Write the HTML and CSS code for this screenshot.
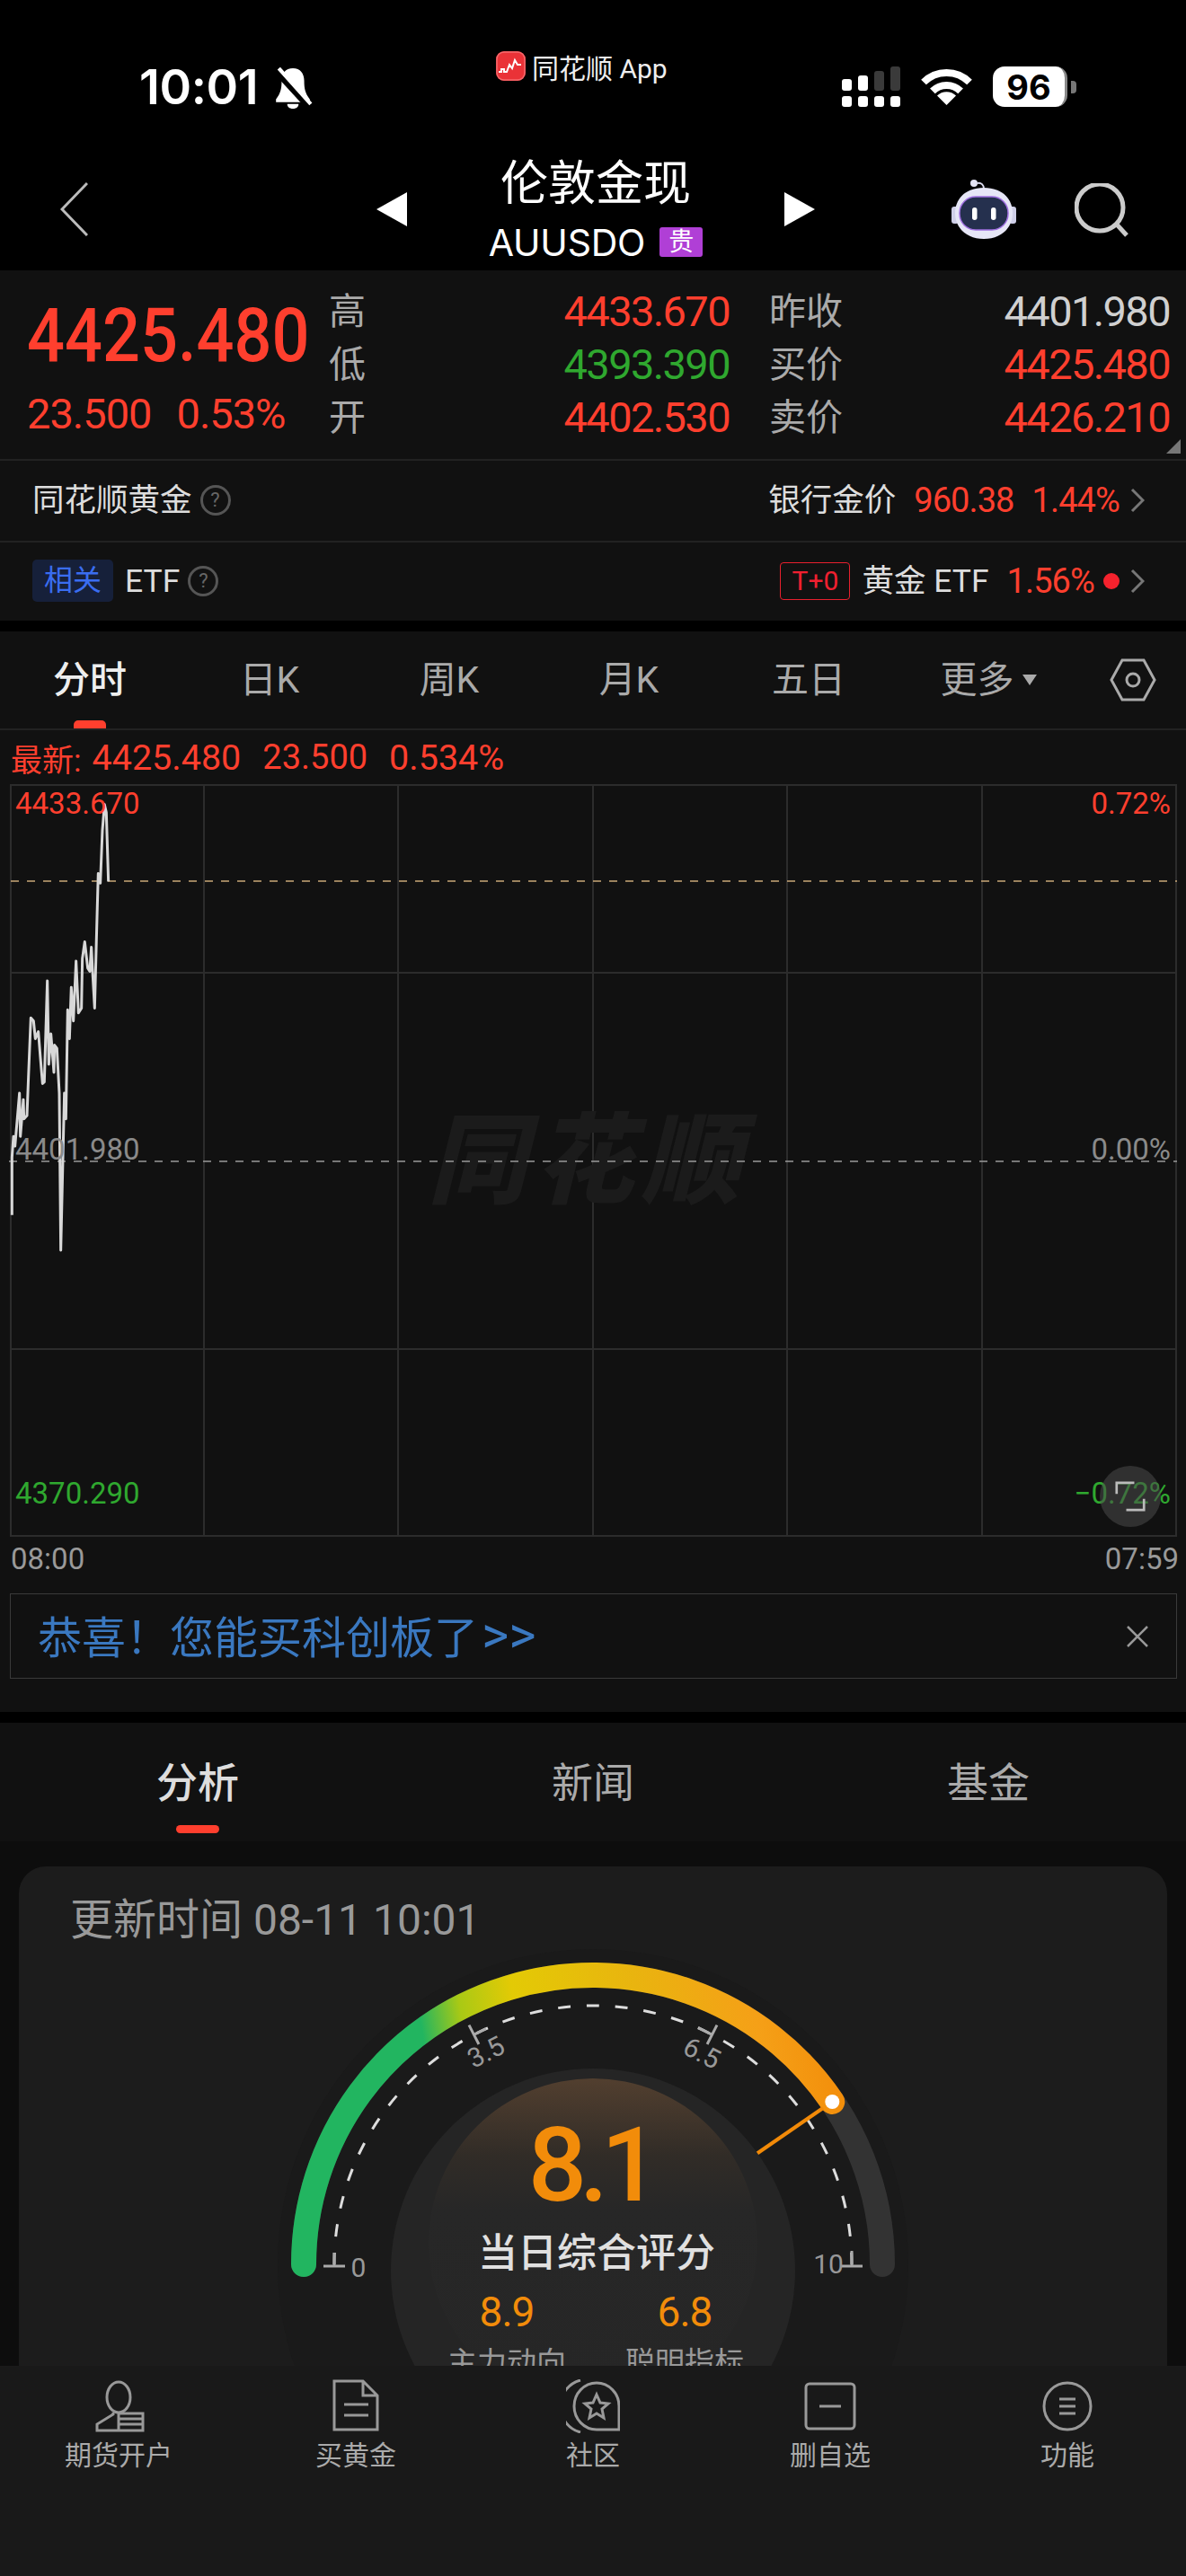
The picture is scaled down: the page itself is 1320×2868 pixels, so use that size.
FILE: index.html
```html
<!DOCTYPE html>
<html lang="zh">
<head>
<meta charset="utf-8">
<title>伦敦金现</title>
<link rel="stylesheet" href="styles.css">
</head>
<body>
<div class="screen">
  <div class="scroll">
    <header class="head">
      <div class="status">
        <div class="status-left">
          <span class="clock">10:01</span>
          <svg class="bell" viewBox="0 0 42 44"><path d="M21 1c-8 0-12 6-12 13 0 9-1 13-6 20v3h36v-3c-5-7-6-11-6-20 0-7-4-13-12-13z" fill="#fff"/><path d="M15 39h12c0 3-2 5-6 5s-6-2-6-5z" fill="#fff"/><path d="M4 4l34 37" stroke="#000" stroke-width="8"/><path d="M6 1l34 38" stroke="#fff" stroke-width="4"/></svg>
        </div>
        <div class="status-app">
          <svg class="app-logo" viewBox="0 0 33 33"><rect width="33" height="33" rx="9" fill="#ea3237"/><rect x="1" y="1" width="31" height="31" rx="8" fill="none" stroke="#f4696d" stroke-width="1.5"/><path d="M3 23h3v-3h3v3h3l3-8 3 4 3-9 3 5h4" fill="none" stroke="#fff" stroke-width="2"/></svg>
          <span class="app-name">同花顺 App</span>
        </div>
        <div class="status-right">
          <svg class="signal" viewBox="0 0 65 45"><g fill="#fff"><rect x="0" y="14" width="11" height="13" rx="3"/><rect x="18" y="10" width="11" height="17" rx="3"/><rect x="0" y="33" width="11" height="12" rx="3"/><rect x="18" y="33" width="11" height="12" rx="3"/><rect x="36" y="33" width="11" height="12" rx="3"/><rect x="54" y="33" width="11" height="12" rx="3"/></g><g fill="#3a3a3a"><rect x="36" y="5" width="11" height="22" rx="3"/><rect x="54" y="0" width="11" height="27" rx="3"/></g></svg>
          <svg class="wifi" viewBox="0 0 57 42"><g fill="none" stroke="#fff" stroke-width="8"><path d="M3 16.500A36 36 0 0 1 54 16.500"/><path d="M12.900 26.400A22 22 0 0 1 44.100 26.400"/></g><path d="M28.500 42L18 31.500A14.800 14.800 0 0 1 39 31.500Z" fill="#fff"/></svg>
          <div class="battery"><span class="battery-num">96</span></div>
          <span class="battery-nub"></span>
        </div>
      </div>
      <nav class="nav">
        <div class="nav-back"><svg class="back" viewBox="0 0 31 60"><path d="M30 1L2 30l28 29" fill="none" stroke="#bbb" stroke-width="3"/></svg></div>
        <svg class="tri" viewBox="0 0 34 38"><path d="M34 0v38L0 19z" fill="#fff"/></svg>
        <div class="nav-title">
          <div class="title">伦敦金现</div>
          <div class="sub"><span class="sub-code">AUUSDO</span><span class="gui">贵</span></div>
        </div>
        <svg class="tri" viewBox="0 0 34 38"><path d="M0 0v38l34-19z" fill="#fff"/></svg>
        <div class="nav-tools">
          <svg class="robot" viewBox="0 0 72 66"><path d="M36 10c0-4-3-7-7-6" fill="none" stroke="#dcdcf0" stroke-width="2"/><circle cx="25" cy="4" r="4" fill="#e4e4f4"/><rect x="0" y="30" width="8" height="19" rx="3" fill="#cfcfe8"/><rect x="64" y="30" width="8" height="19" rx="3" fill="#cfcfe8"/><path d="M36 9c22 0 32 14 32 28 0 17-13 29-32 29S4 54 4 37C4 23 14 9 36 9z" fill="#e6e6f6"/><rect x="9" y="19" width="54" height="37" rx="18" fill="#25304e" stroke="#a070e0" stroke-width="1.500"/><rect x="23" y="31" width="5.500" height="14" rx="2.700" fill="#fff"/><rect x="44" y="31" width="5.500" height="14" rx="2.700" fill="#fff"/></svg>
          <svg class="search" viewBox="0 0 60 60"><circle cx="28" cy="27" r="26" fill="none" stroke="#ccc" stroke-width="5"/><path d="M47 46l11 12" stroke="#ccc" stroke-width="5"/></svg>
        </div>
      </nav>
    </header>

    <section class="quote">
      <div class="quote-top">
        <div class="price-box">
          <div class="price">4425.480</div>
          <div class="change"><span>23.500</span><span>0.53%</span></div>
        </div>
        <div class="quote-grid">
          <span class="q-label">高</span><span class="q-val up">4433.670</span><span class="q-label q-second">昨收</span><span class="q-val flat">4401.980</span>
          <span class="q-label">低</span><span class="q-val down">4393.390</span><span class="q-label q-second">买价</span><span class="q-val up">4425.480</span>
          <span class="q-label">开</span><span class="q-val up">4402.530</span><span class="q-label q-second">卖价</span><span class="q-val up">4426.210</span>
        </div>
        <span class="corner"></span>
      </div>
      <div class="info-row">
        <div class="info-left"><span class="info-text">同花顺黄金</span><span class="help">?</span></div>
        <div class="info-right">
          <span class="info-text">银行金价</span><span class="num up gap-20">960.38</span><span class="num up gap-20">1.44%</span>
          <svg class="chev" viewBox="0 0 16 28"><path d="M2 2l12 12L2 26" fill="none" stroke="#777" stroke-width="3"/></svg>
        </div>
      </div>
      <div class="info-row info-row-last">
        <div class="info-left"><span class="chip">相关</span><span class="info-text etf">ETF</span><span class="help">?</span></div>
        <div class="info-right">
          <span class="t0">T+0</span><span class="info-text etf">黄金 ETF</span><span class="num up gap-20">1.56%</span><span class="dot"></span>
          <svg class="chev" viewBox="0 0 16 28"><path d="M2 2l12 12L2 26" fill="none" stroke="#777" stroke-width="3"/></svg>
        </div>
      </div>
    </section>

    <section class="market">
      <div class="ktabs">
        <span class="ktab active">分时</span>
        <span class="ktab">日K</span>
        <span class="ktab">周K</span>
        <span class="ktab">月K</span>
        <span class="ktab">五日</span>
        <span class="ktab">更多<i class="caret"></i></span>
        <span class="khex"><svg viewBox="0 0 52 48"><path d="M2 24L14 2h24l12 22-12 22H14z" fill="none" stroke="#aaa" stroke-width="3"/><circle cx="26" cy="24" r="7" fill="none" stroke="#aaa" stroke-width="3"/></svg></span>
      </div>
      <div class="latest"><span class="l-0">最新:</span><span class="l-1">4425.480</span><span class="l-2">23.500</span><span class="l-3">0.534%</span></div>
      <div class="chart">
        <svg class="chart-svg" viewBox="0 873 1320 838">
          <g stroke="#2c2c2c" stroke-width="2" fill="none">
            <rect x="12" y="874" width="1297" height="836"/>
            <path d="M227 874V1710M443 874V1710M660 874V1710M876 874V1710M1093 874V1710M12 1083H1309M12 1502H1309"/>
          </g>
        </svg>
        <span class="watermark">同花顺</span>
        <svg class="chart-svg chart-over" viewBox="0 873 1320 838">
          <path d="M12 981H1310" stroke="#c9a878" stroke-width="1.500" stroke-dasharray="9 9"/>
          <path d="M10 1293H1310" stroke="#999" stroke-width="1.500" stroke-dasharray="9 9"/>
          <g transform="translate(0 860) scale(.3333 .3571)">
            <path d="M40 1380L40 1200 45 1135 50 1165 65 1000 68 1135 78 1020 80 1080 90 1070 95 950 103 765 112 775 118 830 128 808 135 890 142 970 148 965 158 650 163 910 170 815 180 935 182 850 190 860 198 1000 203 1490 215 1000 220 1080 226 740 232 830 238 670 245 775 254 588 262 750 272 735 275 580 283 528 293 610 300 620 305 545 310 635 316 735 322 520 328 315 335 345 342 180 349 100 355 125 362 340" fill="none" stroke="#d8d8d8" stroke-width="3" vector-effect="non-scaling-stroke" stroke-linejoin="round"/>
          </g>
        </svg>
        <span class="ax ax-l ax-top up">4433.670</span>
        <span class="ax ax-l ax-mid grey">4401.980</span>
        <span class="ax ax-l ax-bot down">4370.290</span>
        <span class="ax ax-r ax-top up">0.72%</span>
        <span class="ax ax-r ax-mid grey">0.00%</span>
        <span class="ax ax-r ax-bot down">−0.72%</span>
        <span class="expand"><svg viewBox="0 0 38 38"><path d="M2 16V2h22M36 22v14H14" fill="none" stroke="#bbb" stroke-width="3"/></svg></span>
      </div>
      <div class="times"><span>08:00</span><span>07:59</span></div>
      <div class="banner">
        <span class="banner-text">恭喜！您能买科创板了<span class="banner-more">&gt;&gt;</span></span>
        <svg class="close" viewBox="0 0 24 24"><path d="M1 1l22 22M23 1L1 23" stroke="#999" stroke-width="2.500"/></svg>
      </div>
    </section>

    <section class="lower">
      <div class="tabs2">
        <span class="tab2 active">分析</span>
        <span class="tab2">新闻</span>
        <span class="tab2">基金</span>
      </div>
      <div class="card">
        <div class="card-title">更新时间 08-11 10:01</div>
        <div class="gauge">
          <svg class="gauge-svg" viewBox="21 2170 1278 470">
            <defs>
              <linearGradient id="arcGrad" gradientUnits="userSpaceOnUse" x1="440" y1="2300" x2="940" y2="2220">
                <stop offset="0" stop-color="#22b560"/>
                <stop offset=".07" stop-color="#22b560"/>
                <stop offset=".16" stop-color="#a9c915"/>
                <stop offset=".28" stop-color="#e3ca05"/>
                <stop offset=".55" stop-color="#e9b40f"/>
                <stop offset=".8" stop-color="#f5a017"/>
                <stop offset="1" stop-color="#f28a08"/>
              </linearGradient>
              <linearGradient id="domeGrad" x1="0" y1="0" x2="0" y2="1">
                <stop offset="0" stop-color="#523f2f"/>
                <stop offset=".235" stop-color="#312c27"/>
                <stop offset=".4" stop-color="#272727"/>
                <stop offset="1" stop-color="#262626"/>
              </linearGradient>
            </defs>
            <circle cx="660" cy="2521" r="351" fill="#1a1a1a"/>
            <path d="M338 2521A322 322 0 0 1 982 2521" fill="none" stroke="#333" stroke-width="28" stroke-linecap="round"/>
            <path d="M338 2521A322 322 0 0 1 926.300 2340" fill="none" stroke="url(#arcGrad)" stroke-width="28" stroke-linecap="round"/>
            <path d="M372 2521A288 288 0 0 1 948 2521" fill="none" stroke="#ddd" stroke-width="3" stroke-dasharray="14 17.850" stroke-dashoffset=".85"/>
            <g stroke="#aaa" stroke-width="3">
              <path d="M360 2523H384M372 2523V2508"/>
              <path d="M360 2523H384M372 2523V2508" transform="rotate(63 660 2521)"/>
              <path d="M936 2523H960M948 2523V2506"/>
              <path d="M936 2523H960M948 2523V2506" transform="rotate(-63 660 2521)"/>
            </g>
            <text class="g-tick" x="399" y="2535">0</text>
            <text class="g-tick" x="922" y="2531">10</text>
            <text class="g-tick" x="541" y="2295" transform="rotate(-27 541 2285)">3.5</text>
            <text class="g-tick" x="781" y="2296" transform="rotate(27 781 2286)">6.5</text>
            <path d="M842 2398L916 2347" stroke="#f28a08" stroke-width="4"/>
            <circle cx="926.300" cy="2340" r="8" fill="#fff"/>
            <circle cx="660" cy="2528" r="225" fill="#252525"/>
            <circle cx="660" cy="2497" r="183" fill="url(#domeGrad)"/>
            <text class="g-score" x="657" y="2450">8.1</text>
            <text class="g-name" x="664" y="2524">当日综合评分</text>
            <text class="g-sub" x="564" y="2590">8.9</text>
            <text class="g-sub" x="762" y="2590">6.8</text>
            <text class="g-cap" x="564" y="2642">主力动向</text>
            <text class="g-cap" x="762" y="2642">聪明指标</text>
          </svg>
        </div>
      </div>
    </section>
  </div>

  <footer class="bar">
    <div class="bar-item">
      <svg class="bar-icon" viewBox="0 0 60 60"><ellipse cx="30" cy="20" rx="13" ry="17"/><path d="M24 37v2L6 50v7h24M30 38h27v19H30zM30 44h27M30 50h27"/></svg>
      <span>期货开户</span>
    </div>
    <div class="bar-item">
      <svg class="bar-icon" viewBox="0 0 60 60"><path d="M6 2h32l16 16v38H6zM38 2v16h16M17 28h27M17 40h27"/></svg>
      <span>买黄金</span>
    </div>
    <div class="bar-item">
      <svg class="bar-icon" viewBox="0 0 60 60"><path d="M59 30A25 26 0 1 0 34 56h25zM16 1A30 30 0 0 0 16 59M34 17l4 9 9 1-7 6 2 10-8-5-8 5 2-10-7-6 9-1z"/></svg>
      <span>社区</span>
    </div>
    <div class="bar-item">
      <svg class="bar-icon" viewBox="0 0 60 60"><rect x="3" y="5" width="54" height="50" rx="4"/><path d="M18 30h24"/></svg>
      <span>删自选</span>
    </div>
    <div class="bar-item">
      <svg class="bar-icon" viewBox="0 0 60 60"><circle cx="30" cy="30" r="26"/><path d="M21 22h18M21 30h18M21 38h18"/></svg>
      <span>功能</span>
    </div>
  </footer>
</div>
</body>
</html>
```
FILE: styles.css
```css
* { box-sizing: border-box; }
html, body { margin: 0; padding: 0; background: #000; }
body { font-family: Roboto, "Noto Sans CJK SC", sans-serif; color: #ccc; }
.screen { width: 1320px; height: 2868px; display: flex; flex-direction: column; overflow: hidden; }
.scroll { height: 2634px; overflow: hidden; flex: none; }

.up { color: #ff3f2e; }
.down { color: #2fa82f; }
.flat { color: #d0d0d0; }
.grey { color: #8a8a8a; }

.head { height: 301px; background: #000; }
.status { height: 172px; display: grid; grid-template-columns: 552px 1fr auto; }
.status-left { display: flex; padding: 70px 0 0 155px; gap: 17px; align-items: flex-start; }
.clock { font-family: Inter, sans-serif; font-weight: 600; font-size: 54px; line-height: 54px; color: #fff; letter-spacing: -.4px; }
.bell { width: 44px; height: 46px; margin-top: 5px; }
.status-app { display: flex; align-items: center; gap: 7px; height: 33px; margin-top: 57px; }
.app-logo { width: 33px; height: 33px; }
.app-name { font-size: 30px; color: #eee; }
.status-right { display: flex; align-items: flex-start; padding: 74px 122px 0 0; }
.signal { width: 65px; height: 45px; }
.wifi { width: 57px; height: 42px; margin: 1px 23px 0 23px; }
.battery { width: 83px; height: 45px; background: #fff; border-radius: 13px; display: flex; align-items: center; justify-content: center; border-right: 3px solid #888; }
.battery-num { font-family: Inter, sans-serif; font-weight: 700; font-size: 38px; color: #000; }
.battery-nub { width: 6px; height: 14px; background: #777; border-radius: 0 4px 4px 0; margin: 16px 0 0 4px; }

.nav { height: 129px; display: grid; grid-template-columns: 419px 34px 420px 34px 1fr; align-items: center; }
.nav-back { padding-left: 67px; display: flex; margin-top: -8px; }
.back { width: 31px; height: 60px; }
.tri { width: 34px; height: 38px; margin-top: -8px; }
.nav-title { display: flex; flex-direction: column; align-items: center; margin-top: -6px; }
.title { font-size: 53px; line-height: 60px; color: #fff; }
.sub { display: flex; align-items: center; gap: 16px; line-height: 46px; color: #fff; margin-top: 12px; }
.sub-code { font-family: Inter, sans-serif; font-size: 41px; letter-spacing: -.2px; }
.gui { width: 48px; height: 33px; background: #b03fd6; border-radius: 3px; font-size: 28px; line-height: 33px; text-align: center; }
.nav-tools { display: flex; align-items: flex-start; padding-left: 152px; margin-top: -8px; gap: 65px; }
.robot { width: 72px; height: 66px; }
.search { width: 60px; height: 60px; margin-top: 4px; }

.quote { height: 390px; background: #111; border-top: 1px solid #111; }
.quote-top { position: relative; display: flex; height: 211px; border-bottom: 2px solid #222; }
.price-box { width: 366px; padding-left: 30px; flex: none; }
.price { width: 336px; font-size: 83px; line-height: 84px; font-weight: 500; color: #ff3f2e; margin-top: 30px; white-space: nowrap; transform: scaleX(.89); transform-origin: left center; }
.change { display: flex; gap: 28px; font-size: 47px; line-height: 50px; letter-spacing: -1px; color: #ff3f2e; margin-top: 20px; }
.quote-grid { flex: 1; display: grid; grid-template-columns: 50px 396px 125px 1fr; grid-auto-rows: 59px; padding: 14px 18px 0 0; align-items: center; }
.q-label { font-size: 41px; line-height: 56px; margin-top: 2px; color: #aaa; }
.q-val { font-size: 47px; font-weight: 400; letter-spacing: -1.600px; text-align: right; margin-top: 2px; }
.q-second { padding-left: 44px; white-space: nowrap; }
.corner { position: absolute; right: 6px; bottom: 6px; width: 0; height: 0; border-style: solid; border-width: 0 0 16px 16px; border-color: transparent transparent #777 transparent; }

.info-row { height: 91px; display: flex; justify-content: space-between; align-items: center; padding: 0 46px 2px 36px; border-bottom: 2px solid #222; }
.info-row-last { height: 87px; padding-bottom: 2px; border-bottom: 0; }
.info-left, .info-right { display: flex; align-items: center; }
.info-text { font-size: 35.500px; line-height: 44px; color: #ddd; }
.help { width: 34px; height: 34px; border-radius: 50%; border: 3px solid #555; color: #666; font-size: 22px; line-height: 28px; text-align: center; margin-left: 9px; }
.num { font-size: 38px; letter-spacing: -.9px; }
.gap-20 { margin-left: 20px; }
.chev { width: 16px; height: 28px; margin-left: 12px; }
.chip { width: 90px; height: 47px; border-radius: 5px; background: #16203a; color: #3a6df0; font-size: 32px; line-height: 47px; text-align: center; }
.etf { margin-left: 13px; }
.t0 { width: 78px; height: 42px; border: 1px solid #e8202e; border-radius: 4px; color: #f02030; font-size: 30px; line-height: 40px; text-align: center; }
.dot { width: 18px; height: 18px; border-radius: 50%; background: #f5222d; margin-left: 10px; }

.market { height: 1203px; margin-top: 12px; background: #111; }
.ktabs { height: 110px; display: flex; border-bottom: 2px solid #222; }
.ktab { position: relative; width: 200px; height: 108px; display: flex; align-items: center; justify-content: center; font-size: 41px; line-height: 60px; color: #aaa; }
.ktab.active { color: #eee; font-weight: 500; }
.ktab.active::after { content: ""; position: absolute; left: 82px; bottom: 0; width: 36px; height: 9px; border-radius: 5px 5px 0 0; background: #ff3f2e; }
.caret { width: 0; height: 0; border-style: solid; border-width: 12px 8px 0 8px; border-color: #aaa transparent transparent transparent; margin-left: 9px; }
.khex { flex: 1; display: flex; align-items: center; padding-left: 35px; }
.khex svg { width: 52px; height: 48px; }

.latest { height: 60px; padding-left: 12px; display: flex; align-items: center; font-size: 39.500px; color: #ff3f2e; white-space: nowrap; }
.l-0 { font-size: 35px; }
.l-1 { margin-left: 12px; }
.l-2 { margin-left: 24px; font-size: 38px; }
.l-3 { margin-left: 24px; }

.chart { position: relative; height: 838px; }
.chart-svg { display: block; width: 1320px; height: 838px; }
.chart-over { position: absolute; left: 0; top: 0; }
.watermark { position: absolute; left: 476px; top: 356px; font-size: 110px; line-height: 130px; letter-spacing: 9px; font-weight: 900; font-style: italic; color: #1b1b1b; }
.ax { position: absolute; font-size: 33px; line-height: 40px; white-space: nowrap; }
.ax-l { left: 17px; }
.ax-r { right: 17px; }
.ax-top { top: 2px; }
.ax-mid { top: 387px; }
.ax-bot { top: 770px; }
.expand { position: absolute; left: 1224px; top: 759px; width: 68px; height: 68px; border-radius: 50%; background: rgba(75,75,75,.55); display: flex; align-items: center; justify-content: center; }
.expand svg { width: 34px; height: 34px; }

.times { height: 63px; display: flex; justify-content: space-between; padding: 0 8px 0 12px; font-size: 33px; line-height: 50px; color: #999; }
.banner { height: 95px; margin: 0 10px 0 11px; border: 1px solid #3a3a3a; display: flex; align-items: center; justify-content: space-between; padding: 0 31px 4px 30px; }
.banner-text { font-size: 49px; color: #3a78c0; display: flex; align-items: center; }
.banner-more { font-size: 58px; line-height: 60px; margin-left: 4px; }
.close { width: 24px; height: 24px; margin-top: 4px; }

.lower { background: #0d0d0d; margin-top: 12px; }
.tabs2 { height: 132px; background: #111; display: grid; grid-template-columns: repeat(3, 440px); }
.tab2 { position: relative; display: flex; align-items: flex-start; justify-content: center; padding-top: 34px; font-size: 46px; line-height: 66px; color: #aaa; }
.tab2.active { color: #ddd; font-weight: 500; }
.tab2.active::after { content: ""; position: absolute; left: 196px; bottom: 9px; width: 48px; height: 9px; border-radius: 5px; background: #ff3f2e; }
.card { margin: 28px 21px 0; background: #1c1c1c; border-radius: 30px 30px 0 0; height: 600px; }
.card-title { height: 92px; padding: 26px 0 0 57px; font-size: 48px; line-height: 68px; color: #999; }
.gauge { height: 470px; }
.gauge-svg { display: block; width: 1278px; height: 470px; }
.g-tick { font-family: Roboto, sans-serif; font-size: 30px; fill: #999; text-anchor: middle; }
.g-score { font-family: Roboto, sans-serif; font-size: 115px; font-weight: 500; letter-spacing: -8px; fill: #f28c0a; text-anchor: middle; }
.g-name { font-family: "Noto Sans CJK SC", sans-serif; font-size: 44px; font-weight: 500; fill: #e0e0e0; text-anchor: middle; }
.g-sub { font-family: Roboto, sans-serif; font-size: 46px; letter-spacing: -1px; fill: #f28c0a; text-anchor: middle; }
.g-cap { font-family: "Noto Sans CJK SC", sans-serif; font-size: 33px; fill: #999; text-anchor: middle; }

.bar { flex: 1; background: #191919; display: grid; grid-template-columns: repeat(5, 264px); align-content: start; padding-top: 15px; }
.bar-item { display: flex; flex-direction: column; align-items: center; font-size: 30px; line-height: 40px; color: #aaa; gap: 5px; }
.bar-icon { width: 60px; height: 60px; fill: none; stroke: #999; stroke-width: 3; }
```
